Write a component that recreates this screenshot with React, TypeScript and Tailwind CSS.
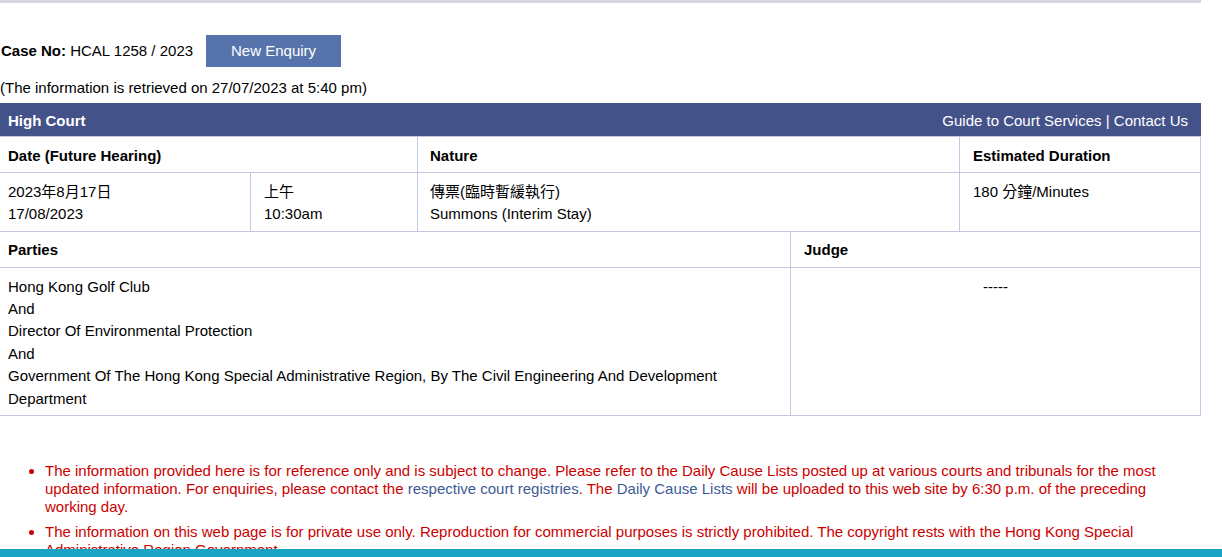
const font = {
  fontFamily: '"Liberation Sans", Arial, "Noto Sans CJK TC", sans-serif',
};

const cell = "border-r border-b border-[#c3c8e6] pt-[7.6px] pb-[5.2px] leading-[22.4px]";

function Notes() {
  return (
    <ul className="mt-[46px] w-[1200px] list-disc pl-[45px] text-[15px] leading-[18px] text-[#cc0000]">
      <li className="mb-[7px]">
        The information provided here is for reference only and is subject to change. Please refer to
        the Daily Cause Lists posted up at various courts and tribunals for the most updated
        information. For enquiries, please contact the{" "}
        <a className="text-[#3d5a96]">respective court registries</a>. The{" "}
        <a className="text-[#3d5a96]">Daily Cause Lists</a> will be uploaded to this web site by 6:30
        p.m. of the preceding working day.
      </li>
      <li className="mb-[7px]">
        The information on this web page is for private use only. Reproduction for commercial
        purposes is strictly prohibited. The copyright rests with the Hong Kong Special
        Administrative Region Government.
      </li>
    </ul>
  );
}

export default function App() {
  return (
    <div className="min-h-screen bg-white text-[15px] text-black" style={font}>
      <div className="h-[3px] w-[1201px] bg-[#d3d5e0]" />

      <div className="mt-[32px] flex h-[32px] items-center pl-[1px]">
        <span>
          <b>Case No:</b> HCAL 1258 / 2023
        </span>
        <button className="ml-[13px] h-[32px] w-[135px] bg-[#5674ab] text-center text-[15px] text-white">
          New Enquiry
        </button>
      </div>

      <div className="mt-[12px] leading-[17px]">
        (The information is retrieved on 27/07/2023 at 5:40 pm)
      </div>

      <div className="mt-[7px] w-[1201px]">
        <div className="flex h-[34px] items-center justify-between border-b border-[#c3c8e6] bg-[#44528a] pl-[8px] pr-[13px] pt-[3px] text-white">
          <b>High Court</b>
          <span>
            <a>Guide to Court Services</a> | <a>Contact Us</a>
          </span>
        </div>

        <div className="flex font-bold">
          <div className={`${cell} w-[418px] pl-[8px]`}>Date (Future Hearing)</div>
          <div className={`${cell} w-[542px] pl-[12px]`}>Nature</div>
          <div className={`${cell} w-[241px] pl-[13px]`}>Estimated Duration</div>
        </div>

        <div className="flex">
          <div className={`${cell} w-[251px] pl-[8px]`}>
            <div>2023年8月17日</div>
            <div>17/08/2023</div>
          </div>
          <div className={`${cell} w-[167px] pl-[13px]`}>
            <div>上午</div>
            <div>10:30am</div>
          </div>
          <div className={`${cell} w-[542px] pl-[12px]`}>
            <div>傳票(臨時暫緩執行)</div>
            <div>Summons (Interim Stay)</div>
          </div>
          <div className={`${cell} w-[241px] pl-[13px]`}>180 分鐘/Minutes</div>
        </div>

        <div className="flex font-bold">
          <div className={`${cell} w-[791px] pl-[8px]`}>Parties</div>
          <div className={`${cell} w-[410px] pl-[13px]`}>Judge</div>
        </div>

        <div className="flex">
          <div className={`${cell} w-[791px] pl-[8px] pr-[60px]`}>
            <div>Hong Kong Golf Club</div>
            <div>And</div>
            <div>Director Of Environmental Protection</div>
            <div>And</div>
            <div>
              Government Of The Hong Kong Special Administrative Region, By The Civil Engineering And
              Development Department
            </div>
          </div>
          <div className={`${cell} w-[410px] text-center`}>-----</div>
        </div>
      </div>

      <Notes />

      <div className="fixed bottom-0 left-0 h-[8px] w-full bg-[#1aa3c3]" />
    </div>
  );
}
